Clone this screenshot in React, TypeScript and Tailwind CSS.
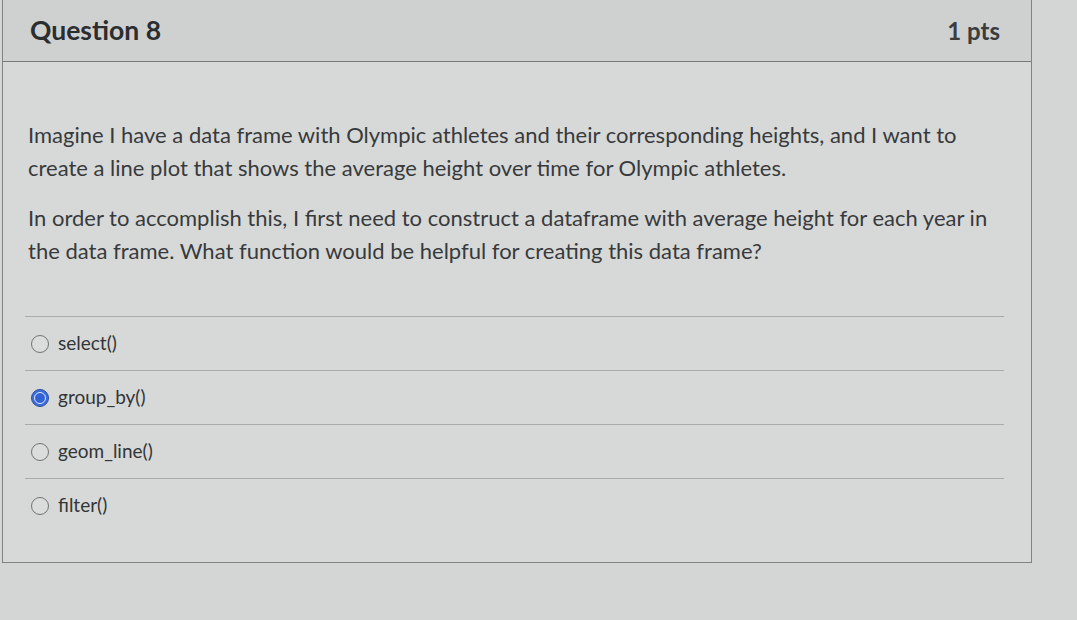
const answers = [
  { label: 'select()', checked: false },
  { label: 'group_by()', checked: true },
  { label: 'geom_line()', checked: false },
  { label: 'filter()', checked: false },
]

function Radio({ checked }: { checked: boolean }) {
  if (checked) {
    return (
      <span className="flex h-[18px] w-[18px] shrink-0 items-center justify-center rounded-full border border-[#2c4f96] bg-[#3a6ee0]">
        <span className="flex h-[12px] w-[12px] items-center justify-center rounded-full border-[1.5px] border-[#dfe6f3] bg-[#2f62d6]" />
      </span>
    )
  }
  return <span className="h-[18px] w-[18px] shrink-0 rounded-full border-[1.5px] border-[#717374] bg-[#dadddc]" />
}

export default function App() {
  return (
    <div className="h-[620px] w-full overflow-hidden bg-[#d3d6d5] pl-[2px] font-['Lato','Noto_Sans',sans-serif] text-[#353739]">
      <div className="w-[1030px] border-x border-b border-[#808283] bg-[#d6d9d8]">
        <div className="flex h-[62px] items-center justify-between border-b border-[#77797a] bg-[#ced1d0] pl-[27px] pr-[31px]">
          <h2 className="text-[26.5px] font-bold text-[#2b2d2f]">Question 8</h2>
          <span className="text-[24px] font-bold text-[#3a3c3e]">1 pts</span>
        </div>
        <div className="pt-[56px] pb-[30px]">
          <div className="px-[25px] text-[22px] leading-[33px] text-[#383a3c]">
            <p>
              <span className="block whitespace-nowrap">
                Imagine I have a data frame with Olympic athletes and their corresponding heights, and I want to
              </span>
              <span className="block whitespace-nowrap">
                create a line plot that shows the average height over time for Olympic athletes.
              </span>
            </p>
            <p className="mt-[17px]">
              <span className="block whitespace-nowrap">
                In order to accomplish this, I first need to construct a dataframe with average height for each year in
              </span>
              <span className="block whitespace-nowrap">
                the data frame. What function would be helpful for creating this data frame?
              </span>
            </p>
          </div>
          <div className="mt-[49px] ml-[22px] mr-[27px]">
            {answers.map(a => (
              <div key={a.label} className="flex h-[54px] items-center gap-[9px] border-t border-[#a9abab] pl-[6px]">
                <Radio checked={a.checked} />
                <span className="text-[19px] text-[#333537]">{a.label}</span>
              </div>
            ))}
          </div>
        </div>
      </div>
    </div>
  )
}
